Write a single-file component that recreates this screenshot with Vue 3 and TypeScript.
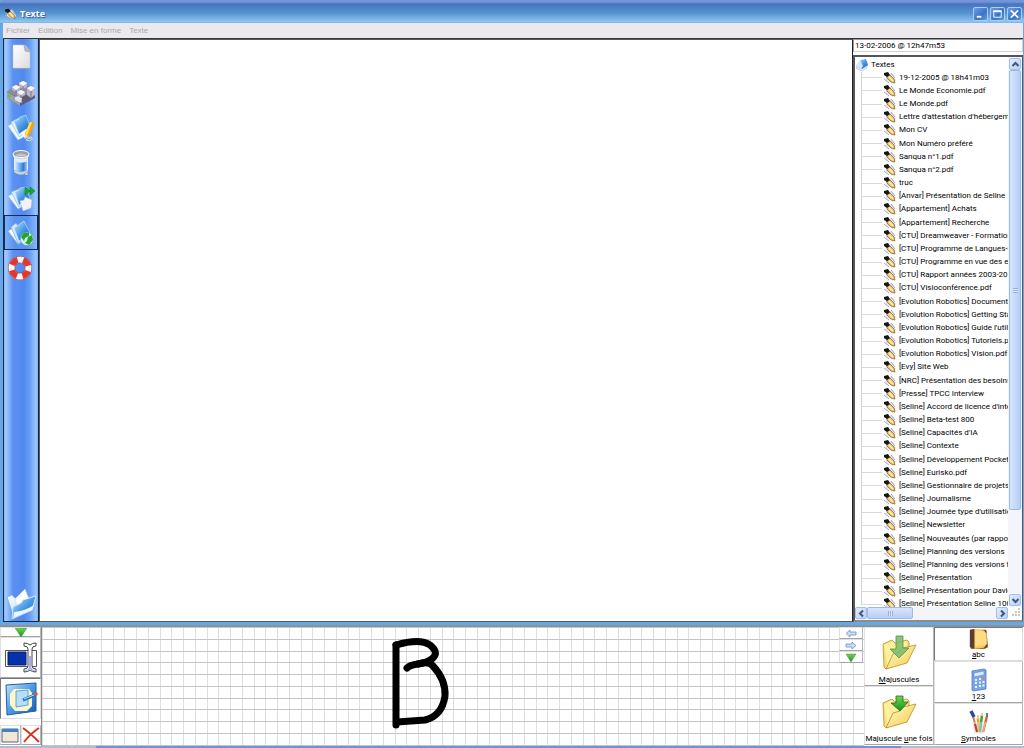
<script setup lang="ts">
import { ref } from 'vue'

interface Tool { id: string; label: string }

const menus: string[] = ['Fichier', 'Edition', 'Mise en forme', 'Texte']
const tools: Tool[] = [
  { id: 'page', label: 'Nouveau' },
  { id: 'blocks', label: 'Organiser' },
  { id: 'edit', label: 'Modifier' },
  { id: 'bin', label: 'Supprimer' },
  { id: 'export', label: 'Exporter' },
  { id: 'web', label: 'Publier' },
  { id: 'help', label: 'Aide' },
]
const activeTool = ref('web')
const docName = ref('13-02-2006 @ 12h47m53')
const content = ref('')
const docs: string[] = [
  '19-12-2005 @ 18h41m03',
  'Le Monde Economie.pdf',
  'Le Monde.pdf',
  "Lettre d'attestation d'hébergeme",
  'Mon CV',
  'Mon Numéro préféré',
  'Sanqua n°1.pdf',
  'Sanqua n°2.pdf',
  'truc',
  '[Anvar] Présentation de Seline',
  '[Appartement] Achats',
  '[Appartement] Recherche',
  '[CTU] Dreamweaver - Formation',
  '[CTU] Programme de Langues-U',
  '[CTU] Programme en vue des e',
  '[CTU] Rapport années 2003-20',
  '[CTU] Visioconférence.pdf',
  '[Evolution Robotics] Documenta',
  '[Evolution Robotics] Getting Sta',
  "[Evolution Robotics] Guide l'utilis",
  '[Evolution Robotics] Tutoriels.pd',
  '[Evolution Robotics] Vision.pdf',
  '[Evy] Site Web',
  '[NRC] Présentation des besoins',
  '[Presse] TPCC Interview',
  "[Seline] Accord de licence d'inté",
  '[Seline] Beta-test 800',
  "[Seline] Capacités d'IA",
  '[Seline] Contexte',
  '[Seline] Développement Pocket',
  '[Seline] Eurisko.pdf',
  '[Seline] Gestionnaire de projets',
  '[Seline] Journalisme',
  "[Seline] Journée type d'utilisation",
  '[Seline] Newsletter',
  '[Seline] Nouveautés (par rappor',
  '[Seline] Planning des versions',
  '[Seline] Planning des versions fu',
  '[Seline] Présentation',
  '[Seline] Présentation pour David',
  '[Seline] Présentation Seline 100',
]
// line positions inside one repeating 94px tile of squared paper
const ruling: number[] = [0, 12, 24, 35, 47, 59, 71, 82]
</script>

<template>
  <div class="desktop">
    <svg class="defs" aria-hidden="true">
      <defs>
        <linearGradient id="gBlue" x1="0" y1="0" x2="1" y2="1">
          <stop offset="0" stop-color="#c4e4fb" /><stop offset=".5" stop-color="#4a9be6" /><stop offset="1" stop-color="#1257b4" />
        </linearGradient>
        <linearGradient id="gPale" x1="0" y1="0" x2="1" y2="1">
          <stop offset="0" stop-color="#ffffff" /><stop offset="1" stop-color="#a8d2f5" />
        </linearGradient>
        <linearGradient id="gPage" x1="0" y1="0" x2="1" y2="1">
          <stop offset="0" stop-color="#ffffff" /><stop offset="1" stop-color="#dcdce0" />
        </linearGradient>
        <linearGradient id="gFolder" x1="0" y1="0" x2="1" y2="1">
          <stop offset="0" stop-color="#fffbd0" /><stop offset="1" stop-color="#f3cb4a" />
        </linearGradient>
        <linearGradient id="gGreen" x1="0" y1="0" x2="0" y2="1">
          <stop offset="0" stop-color="#72d25a" /><stop offset="1" stop-color="#169512" />
        </linearGradient>
        <linearGradient id="gGlass" x1="0" y1="0" x2="1" y2="0">
          <stop offset="0" stop-color="#d3ebff" /><stop offset=".35" stop-color="#7cb8f2" /><stop offset=".7" stop-color="#2f7bd4" /><stop offset="1" stop-color="#9dcbf7" />
        </linearGradient>
        <symbol id="pencil" viewBox="0 0 13 12">
          <path d="M3 4 9 1l4 7-3 4-7-4z" fill="#dfe1f0" />
          <path d="M8 1l4 5M1 7l5 4" stroke="#a6abc4" />
          <path d="M4 4 7 3 11 7 12 11 8 10 4 6z" fill="#f0c462" stroke="#80612f" stroke-width=".7" />
          <path d="M6 5l4 4" stroke="#fff3be" stroke-width="1.3" />
          <path d="M1 1 5 0 7 3 4 5 1 3z" fill="#171717" />
        </symbol>
      </defs>
    </svg>

    <section class="window">
      <header class="titlebar">
        <svg class="app-icon" viewBox="0 0 13 12"><use href="#pencil" /></svg>
        <h1>Texte</h1>
        <div class="winbtns">
          <button type="button" aria-label="Réduire"><svg viewBox="0 0 14 13"><path d="M3 9.5h5" stroke="#fff" stroke-width="2" /></svg></button>
          <button type="button" aria-label="Agrandir"><svg viewBox="0 0 14 13"><path d="M3 3.5h8V10H3z" fill="none" stroke="#fff" /><path d="M2.500 3.500h9" stroke="#fff" stroke-width="2" /></svg></button>
          <button type="button" aria-label="Fermer"><svg viewBox="0 0 14 13"><path d="M3 2.500l8 8M11 2.500l-8 8" stroke="#fff" stroke-width="1.800" /></svg></button>
        </div>
      </header>
      <nav class="menubar">
        <button v-for="m in menus" :key="m" type="button" disabled>{{ m }}</button>
      </nav>

      <div class="body">
        <aside class="toolbar">
          <button v-for="t in tools" :key="t.id" type="button" class="tool" :class="{ on: activeTool === t.id }" :aria-label="t.label" @click="activeTool = t.id">
            <svg v-if="t.id === 'page'" viewBox="0 0 28 28">
              <path d="M7 1h10l6 6v18H7z" fill="#8c93a0" />
              <path d="M6 1h12l5 6v17H6z" fill="url(#gPage)" stroke="#c5c7ce" stroke-width=".6" />
              <path d="M17 1l1 6 5 1z" fill="#b9bac0" stroke="#8b8c92" stroke-width=".5" />
            </svg>
            <svg v-else-if="t.id === 'blocks'" viewBox="0 0 28 28">
              <path d="M0 13 14 3l14 8v8L13 27 0 19z" fill="#5f5b73" />
              <path d="M0 13 14 3l14 8-15 8z" fill="#8f8b9f" />
              <path d="M0 13l13 7v7L0 19z" fill="#a29fb1" />
              <path d="M12 4l4-2 4 2v4l-4 2-4-2zM5 8l4-2 4 2v3l-4 2-4-2zM10 13l4-2 4 2v3l-4 2-4-2zM20 9l4-2 4 2v7l-4 3-4-3z" fill="#bab7cb" />
              <path d="M12 4l4-2 4 2-4 3zM5 8l4-2 4 2-4 3zM10 13l4-2 4 2-4 3zM20 9l4-2 4 2-4 3z" fill="#f7f7fc" />
              <path d="M8 18l3-1 4 2v5l-3-1-4-2z" fill="#e2e1ec" />
              <path d="M16 7v3M9 11v3M14 16v3M24 12v7M15 20v6" stroke="#6a667f" stroke-width=".8" />
              <path d="M1 15l3 2v2l-3-2z" fill="#32df36" />
            </svg>
            <svg v-else-if="t.id === 'edit'" viewBox="0 0 28 28">
              <path d="M1 12l8-5 11 14-9 5z" fill="#f3f9ff" stroke="#9cc7ef" stroke-width=".6" />
              <path d="M4 8l8-4 9 13-9 6z" fill="#e3f2ff" stroke="#8abce8" stroke-width=".6" />
              <path d="M7 7 11 6l2-3 6-2 4 12-11 7z" fill="url(#gBlue)" stroke="#b4dcf8" stroke-width=".6" />
              <path d="M14 19l5-4 4 4-5 5z" fill="#f6faff" />
              <path d="M17 24q9-2 8 0-5 0-6 2 4 2 7-1" fill="none" stroke="#d5d8e0" />
              <path d="M23 8l5 1-5 12-5 4 0-6z" fill="#f5a013" />
              <path d="M23 8l2 .5-5 13-2-2.500z" fill="#ffe25c" />
              <path d="M18 20l3 2-3 3z" fill="#f4dcb4" />
            </svg>
            <svg v-else-if="t.id === 'bin'" viewBox="0 0 28 28">
              <path d="M7 6v17q7 5 14 0V6z" fill="#e9f1fa" />
              <path d="M8 12q6 3 12 0v9q-6 4-12 0z" fill="url(#gGlass)" />
              <path d="M8 10q6 3 12 0v2q-6 3-12 0z" fill="#d8ecff" />
              <path d="M7 21q7 4 14 0v2q-7 5-14 0z" fill="#d5dae4" stroke="#8797b0" stroke-width=".5" />
              <path d="M18 24h3v2h-3z" fill="#eceff5" stroke="#6c7890" stroke-width=".5" />
              <path d="M6 5v3q8 5 16 0V5z" fill="#d4d7df" />
              <ellipse cx="14" cy="5" rx="8" ry="3.500" fill="#9a9ca8" stroke="#fff" />
              <path d="M8 6q6-3 12 0-6 3-12 0z" fill="#c3c5ce" />
            </svg>
            <svg v-else-if="t.id === 'export'" viewBox="0 0 28 28">
              <path d="M1 12l8-4 9 13-7 4z" fill="#f3f9ff" stroke="#91bce4" stroke-width=".6" />
              <path d="M4 8l8-3 9 13-9 5z" fill="#d7ecff" stroke="#79afe4" stroke-width=".6" />
              <path d="M8 8l3-1 2-3 6-1 4 12-11 6z" fill="url(#gBlue)" stroke="#c4e4fb" stroke-width=".6" />
              <path d="M13 17l4-1 1-3 7 3-1 8-8 3z" fill="#f2f2fb" stroke="#babdd0" stroke-width=".6" />
              <path d="M18 3l5 4-5 4zM23 3l5 4-5 4z" fill="#12ae21" stroke="#08761d" stroke-width=".5" />
            </svg>
            <svg v-else-if="t.id === 'web'" viewBox="0 0 28 28">
              <path d="M1 12l7-4 10 13-7 4z" fill="#f7fbff" stroke="#8ab5e0" stroke-width=".6" />
              <path d="M4 8l5-4 10 15-8 5z" fill="#d3eafe" stroke="#6aa5de" stroke-width=".6" />
              <path d="M7 9 17 2l6 12-11 8z" fill="url(#gBlue)" stroke="#d0eafd" stroke-width=".6" />
              <circle cx="20" cy="20" r="6.500" fill="#d6effa" stroke="#62a3c2" stroke-width=".6" />
              <path d="M14 18l3-4 5 0 0 3-4 2-1 3zM21 18l4-2 1 5-4 5-4-2 2-2z" fill="#24a62b" />
            </svg>
            <svg v-else viewBox="0 0 28 28">
              <circle cx="13" cy="14" r="8.500" fill="none" stroke="#a63a37" stroke-width="7" />
              <circle cx="13" cy="14" r="8.500" fill="none" stroke="#f8f4f5" stroke-width="6" />
              <circle cx="13" cy="14" r="8.500" fill="none" stroke="#e1382c" stroke-width="6" stroke-dasharray="7.676 5.675" stroke-dashoffset="-3" />
            </svg>
          </button>
          <button type="button" class="tool last" aria-label="Ouvrir un dossier">
            <svg viewBox="0 0 32 32">
              <path d="M2 9l5-2 3 3 14-2v15L9 30z" fill="url(#gPale)" stroke="#6aa9e8" stroke-width=".7" />
              <path d="M10 11 20 1l5 13-12 8z" fill="#fbfdff" stroke="#c9d8ec" stroke-width=".6" />
              <path d="M8 19l8-4 2-3 13-4-4 14L7 31z" fill="url(#gBlue)" stroke="#d0e9ff" />
              <path d="M9 24q11-1 20-7l-2 5L8 30z" fill="#eef7ff" />
            </svg>
          </button>
        </aside>

        <textarea v-model="content" class="editor" aria-label="Contenu du texte"></textarea>

        <aside class="panel">
          <input v-model="docName" class="docname" type="text" aria-label="Nom du texte" />
          <div class="treebox">
            <div class="viewport">
              <ul class="tree">
                <li class="root">
                  <svg viewBox="0 0 12 12">
                    <path d="M0 7l5 3 6-4v3l-6 3-5-3z" fill="#e7f0fa" stroke="#8eabc9" stroke-width=".5" />
                    <path d="M1 6 5 1l5-1 2 6-6 4z" fill="url(#gBlue)" />
                    <path d="M0 6l4-5 3 6-2 3z" fill="#d5e9fa" />
                  </svg>
                  <span>Textes</span>
                </li>
                <li v-for="d in docs" :key="d" class="leaf">
                  <svg viewBox="0 0 13 12"><use href="#pencil" /></svg>
                  <span>{{ d }}</span>
                </li>
              </ul>
            </div>
            <div class="vbar">
              <button type="button" class="sb" aria-label="Monter"><svg viewBox="0 0 9 9"><path d="M1.500 6l3-3 3 3" /></svg></button>
              <div class="track"><div class="thumb"><i></i></div></div>
              <button type="button" class="sb" aria-label="Descendre"><svg viewBox="0 0 9 9"><path d="M1.500 3l3 3 3-3" /></svg></button>
            </div>
            <div class="hbar">
              <button type="button" class="sb" aria-label="Gauche"><svg viewBox="0 0 9 9"><path d="M6 1.500l-3 3 3 3" /></svg></button>
              <div class="track"><div class="thumb"><i></i></div></div>
              <button type="button" class="sb" aria-label="Droite"><svg viewBox="0 0 9 9"><path d="M3 1.500l3 3-3 3" /></svg></button>
            </div>
            <svg class="grip" viewBox="0 0 13 12"><path d="M10 2h2M7 5h2M10 5h2M4 8h2M7 8h2M10 8h2" stroke="#c9c7c0" stroke-width="2" /></svg>
          </div>
        </aside>
      </div>
    </section>

    <section class="inputpad">
      <div class="modes">
        <button type="button" class="key" aria-label="Menu"><svg viewBox="0 0 12 9"><path d="M0 0h12L6 9z" fill="url(#gGreen)" stroke="#42924a" stroke-width=".5" /></svg></button>
        <button type="button" class="key big" aria-label="Saisie de texte">
          <svg viewBox="0 0 36 34">
            <path d="M2.500 9.500h31v16h-31z" fill="#fff" stroke="#555" />
            <path d="M5 11h18v13H5z" fill="#0731aa" stroke="#041c70" />
            <path d="M21 2q4 0 6 2 2-2 6-2v3q-4 0-4 3v17q0 3 4 3v3q-4 0-6-2-2 2-6 2v-3q4 0 4-3V8q0-3-4-3z" fill="#fff" stroke="#444" />
            <path d="M26 15h2v11q1 3 4 3v1q-3 0-5-2-2 2-5 2v-1q4 0 4-3z" fill="#aaa9f7" />
          </svg>
        </button>
        <button type="button" class="key big on" aria-label="Saisie manuscrite">
          <svg viewBox="0 0 36 34">
            <path d="M3 3 33 1v28L4 33z" fill="url(#gBlue)" stroke="#255c9c" />
            <path d="M11 7h15l3 4v13l-5 5H12l-5-6V12z" fill="#fff7c4" />
            <path d="M13 9l12-1v15l-12 2z" fill="#b9defa" stroke="#438fce" stroke-width=".8" />
            <path d="M20 18l12-5" stroke="#2574b3" stroke-width="3" />
            <path d="M21 17l10-4" stroke="#b8e4ff" />
            <circle cx="33" cy="12" r="1.800" fill="#e8532a" />
          </svg>
        </button>
        <div class="pair">
          <button type="button" class="key" aria-label="Fenêtre"><svg viewBox="0 0 18 16"><path d="M1 2h16v13H1z" fill="#f1e7d4" stroke="#536780" /><path d="M1 2h16v3H1z" fill="#3d83cc" /></svg></button>
          <button type="button" class="key" aria-label="Fermer le clavier"><svg viewBox="0 0 18 16"><path d="M1 1q7 5 16 14M17 1Q9 6 2 15" fill="none" stroke="#d82b18" stroke-width="1.800" /></svg></button>
        </div>
      </div>

      <div class="paper">
        <svg class="sheet" role="img" aria-label="Lettre B manuscrite">
          <defs>
            <pattern id="squares" width="94" height="94" patternUnits="userSpaceOnUse">
              <rect v-for="p in ruling" :key="'v' + p" :x="p" y="0" width="1" height="94" fill="#dedede" />
              <rect v-for="p in ruling" :key="'h' + p" x="0" :y="p" width="94" height="1" fill="#c4c4c4" />
            </pattern>
          </defs>
          <rect width="100%" height="100%" fill="url(#squares)" />
          <g class="ink">
            <path d="M354 18V60L354 98" />
            <path d="M354 18Q378 11 388 18 397 25 391 31 385 36 376 37 368 38 365 41" />
            <path d="M376 37Q387 34 391 39 404 53 403 69 400 89 383 93L355 95" />
          </g>
        </svg>
        <div class="nav">
          <button type="button" class="key" aria-label="Reculer"><svg viewBox="0 0 12 9"><path d="M1 4.500 5 1v2h6v3H5v2z" fill="#c8dcf6" stroke="#6f92ca" stroke-width=".8" /></svg></button>
          <button type="button" class="key" aria-label="Avancer"><svg viewBox="0 0 12 9"><path d="M11 4.500 7 1v2H1v3h6v2z" fill="#c8dcf6" stroke="#6f92ca" stroke-width=".8" /></svg></button>
          <button type="button" class="key" aria-label="Options"><svg viewBox="0 0 12 9"><path d="M1 1h10L6 9z" fill="url(#gGreen)" stroke="#42924a" stroke-width=".5" /></svg></button>
        </div>
      </div>

      <div class="caps">
        <button v-for="k in 2" :key="k" type="button" class="key label">
          <svg viewBox="0 0 36 36">
            <path d="M2 9l9-4 3 3 12-3 2 2v12L5 34 3 32z" fill="#f8dc78" stroke="#b99134" stroke-width=".8" />
            <path d="M3 10l8-4 3 3 12-3v11L6 30z" fill="#fff0a0" />
            <path d="M5 34l7-15 7-2 3-4 13-3-9 18z" fill="url(#gFolder)" stroke="#b58d22" stroke-width=".8" />
            <path v-if="k === 1" d="M15 1h7v12h6L18 23 9 14h6z" fill="#7fbd6d" fill-opacity=".9" stroke="#4e9848" stroke-width=".8" />
            <path v-else d="M15 2h7v6h5l-8 9-9-8h5z" fill="url(#gGreen)" stroke="#167518" stroke-width=".8" />
          </svg>
          <span v-if="k === 1"><u>M</u>ajuscules</span>
          <span v-else>Majuscule <u>u</u>ne fois</span>
        </button>
      </div>

      <div class="sets">
        <button type="button" class="key label on">
          <svg viewBox="0 0 24 24">
            <path d="M3 2h17l2 19-4 2H3z" fill="#a66f1c" />
            <path d="M5 1l15 2 1 18-15 2z" fill="#f6ca64" />
            <path d="M8 3l11 1 1 14-12 2z" fill="#ffdd85" />
            <path d="M2 2l5-1v22l-5-2z" fill="#5b3c31" />
            <path d="M17 2l3 1v3zM21 17v4l-4 1z" fill="#5b3c31" />
          </svg>
          <span><u>a</u>bc</span>
        </button>
        <button type="button" class="key label">
          <svg viewBox="0 0 24 24">
            <path d="M5 3l12-2 2 1v19L6 23l-1-1z" fill="#7aa6e8" stroke="#5577b2" stroke-width=".8" />
            <path d="M7 5l10-2v4L7 9z" fill="#d6eaff" stroke="#4f7cc0" stroke-width=".5" />
            <path d="M8 12h2M12 11h2M8 15h2M12 14.500h2M8 19h2M12 18h2M15.500 17.500h2M15.500 14h2" stroke="#e8f3ff" stroke-width="2" />
            <path d="M15.500 10.500h2" stroke="#f07c34" stroke-width="2" />
          </svg>
          <span><u>1</u>23</span>
        </button>
        <button type="button" class="key label">
          <svg viewBox="0 0 24 24">
            <path d="M6 6l4 15" stroke="#c98646" stroke-width="2" /><path d="M4 1l3 6" stroke="#264aa5" stroke-width="3.500" />
            <path d="M11 8l1 14" stroke="#ef9e1b" stroke-width="2.500" /><path d="M11 5v4" stroke="#f4ca87" stroke-width="2" />
            <path d="M15 5l-2 17" stroke="#39a549" stroke-width="2.500" /><path d="M15 3v3" stroke="#f4ca87" stroke-width="2" />
            <path d="M20 6l-4 16" stroke="#e96318" stroke-width="2.500" /><path d="M20 3v4" stroke="#5a7fac" stroke-width="2" />
            <path d="M6 12l2 11h8l3-11" fill="#dceafa" fill-opacity=".45" stroke="#c3d0e2" stroke-width=".6" />
            <path d="M8 14l2 8" stroke="#d83524" stroke-width="2" />
          </svg>
          <span><u>S</u>ymboles</span>
        </button>
      </div>
    </section>
    <footer class="edge"><i></i></footer>
  </div>
</template>

<style>
body { margin: 0; }
</style>

<style scoped>
.desktop {
  display: flex;
  flex-direction: column;
  height: 100vh;
  overflow: hidden;
  background: #fff;
  color: #000;
  font: 8px/10px Roboto, "Liberation Sans", Arial, sans-serif;
}
.desktop *, .desktop *::before { box-sizing: border-box; }
.defs { position: absolute; width: 0; height: 0; }
svg { display: block; flex: none; }
button { display: flex; align-items: center; justify-content: center; margin: 0; padding: 0; border: 0; background: none; color: inherit; font: inherit; }

.window {
  flex: 1;
  min-height: 0;
  display: flex;
  flex-direction: column;
  padding: 0 1px 3px 3px;
  background: #66a7e8;
}
.titlebar {
  flex: none;
  display: flex;
  align-items: center;
  gap: 4px;
  height: 23px;
  margin: 0 -1px 0 -3px;
  padding: 4px 2px 0 4px;
  border-radius: 4px 0 0 0;
  background: linear-gradient(#7294d8 0, #7294d8 2px, #4774bd 4px, #5593d0 13px, #82bbea 20px, #8fc7f0 22px, #6fabe8);
}
.app-icon { width: 12px; height: 12px; }
h1 { margin: 0; flex: 1; color: #fff; font: bold 9px/14px "Open Sans", "Noto Sans", sans-serif; text-shadow: 1px 1px 1px #2c5594; }
.winbtns { display: flex; gap: 2px; }
.winbtns button { width: 15px; height: 14px; border: 1px solid #a9cdf3; border-radius: 2px; background: linear-gradient(135deg, #6b9ee0, #3b74c6 60%, #5c9fe2); }
.winbtns svg { width: 13px; height: 12px; }
.menubar { flex: none; display: flex; gap: 8px; height: 15px; padding: 0 3px; background: #ece9ee; }
.menubar button { color: #aaa9ad; font: 8px/10px "Liberation Sans", Arial, sans-serif; }

.body { flex: 1; min-height: 0; display: grid; grid-template: minmax(0, 1fr) / 36px minmax(0, 1fr) 170px; border-top: 1px solid #33363c; background: #fff; }
.toolbar {
  display: flex;
  flex-direction: column;
  padding-top: 1px;
  border: solid #14274c;
  border-width: 0 1px 1px;
  background: linear-gradient(90deg, #84b7fa 0, #a3c9fc 2px, #5b91f2 9px, #5289ee 20px, #68a0f6 26px, #9bc6fd 32px, #7fb0f5);
}
.tool { height: 35px; border: 1px solid transparent; }
.tool svg { width: 28px; height: 28px; }
.tool.on { border: 1px solid #142c5c; background: linear-gradient(90deg, #7eb0f7, #5a93ee 30%, #5a93ee 70%, #86b8f9); }
.tool.last { margin-top: auto; }
.tool.last svg { width: 32px; height: 32px; }
.editor { display: block; width: 100%; height: 100%; margin: 0; padding: 4px; resize: none; outline: 0; border: 1px solid #55585d; border-right-color: #222; border-radius: 0; background: #fff; font: inherit; }

.panel { display: flex; flex-direction: column; min-width: 0; }
.docname { flex: none; width: 100%; height: 13px; padding: 0 1px; border: 1px solid #d2d0cc; border-top-color: #999; border-left-color: #999; border-radius: 0; outline: 0; background: #fff; color: #000; font: inherit; }
.treebox {
  flex: 1;
  min-height: 0;
  display: grid;
  grid-template: minmax(0, 1fr) 13px / minmax(0, 1fr) 14px;
  margin-top: 3px;
  border: solid #55565a;
  border-width: 2px 1px 2px 2px;
  border-bottom-color: #8c8c88;
}
.viewport { overflow: hidden; padding-top: 1px; }
.tree { position: relative; display: grid; grid-auto-rows: 1fr; height: 553px; margin: 0; padding: 0; list-style: none; white-space: nowrap; }
.tree::before { content: ""; position: absolute; left: 6px; top: 14px; bottom: 6px; border-left: 1px solid #d4d4d4; }
.tree li { display: flex; align-items: center; gap: 3px; min-height: 0; }
.root { padding-left: 1px; }
.root svg { width: 12px; height: 12px; }
.leaf::before { content: ""; width: 20px; margin-left: 7px; border-top: 1px solid #d8d8d8; }
.leaf svg { width: 13px; height: 12px; margin-left: -2px; }

.vbar, .hbar { display: flex; background: #f3f5fb; }
.vbar { flex-direction: column; padding: 1px; }
.hbar { grid-row: 2; }
.sb { flex: none; width: 12px; height: 12px; border: 1px solid #a5bfe8; border-radius: 2px; background: linear-gradient(135deg, #e3edfd, #b9d0f7); }
.sb svg { width: 9px; height: 9px; }
.sb path { fill: none; stroke: #3d5684; stroke-width: 2; }
.track { flex: 1; min-width: 0; min-height: 0; }
.thumb { display: flex; align-items: center; justify-content: center; border: 1px solid #9eb9e4; border-radius: 2px; background: #c2d7f8; }
.vbar .thumb { height: 84%; background: linear-gradient(90deg, #d7e6fd, #b7cef6); }
.hbar .thumb { width: 36%; height: 12px; background: linear-gradient(#d7e6fd, #b7cef6); }
.thumb i { width: 5px; height: 5px; background: repeating-linear-gradient(#98b0d8 0 1px, #dfeafd 1px 2px); }
.hbar .thumb i { background: repeating-linear-gradient(90deg, #98b0d8 0 1px, #dfeafd 1px 2px); }
.grip { width: 13px; height: 12px; }

.inputpad {
  flex: none;
  display: grid;
  grid-template: minmax(0, 1fr) / 41px minmax(0, 1fr) 70px 90px;
  height: 121px;
  border-top: 2px solid #8d9299;
  background: #fff;
}
.key { border: 1px solid #e0dfdf; border-right-color: #b7b6b6; border-bottom-color: #a4a4a4; background: #fff; }
.key.on { border-color: #77787c #dcdcdc #dcdcdc #77787c; }
.modes { display: grid; grid-template-rows: 10px 41px 41px 26px; }
.modes svg { width: 12px; height: 9px; }
.modes .big svg { width: 36px; height: 34px; }
.modes .pair { display: grid; grid-template-columns: 1fr 1fr; padding-top: 6px; }
.modes .pair svg { width: 18px; height: 16px; }
.paper { position: relative; border: solid #88898c; border-width: 0 0 0 1px; }
.sheet { width: 100%; height: 100%; }
.ink path { fill: none; stroke: #000; stroke-width: 7; stroke-linecap: round; stroke-linejoin: round; }
.nav { position: absolute; top: 0; right: 1px; display: grid; width: 24px; }
.nav .key { height: 12px; }
.nav svg { width: 12px; height: 9px; }
.caps, .sets { display: grid; padding-bottom: 1px; }
.caps { grid-template-rows: minmax(0, 1fr) minmax(0, 1fr); }
.sets { grid-template-rows: 34px minmax(0, 1fr) minmax(0, 1fr); padding-right: 1px; }
.label { flex-direction: column; justify-content: flex-end; gap: 4px; white-space: nowrap; }
.caps svg { width: 36px; height: 36px; }
.sets .label { gap: 0; }
.sets svg { width: 24px; height: 24px; }
.sets .label.on svg { width: 22px; height: 22px; }
.edge { flex: none; height: 2px; padding: 0 12% 0 96px; background: #a9bfd8; }
.edge i { display: block; height: 2px; background: #6c93dc; }
</style>
